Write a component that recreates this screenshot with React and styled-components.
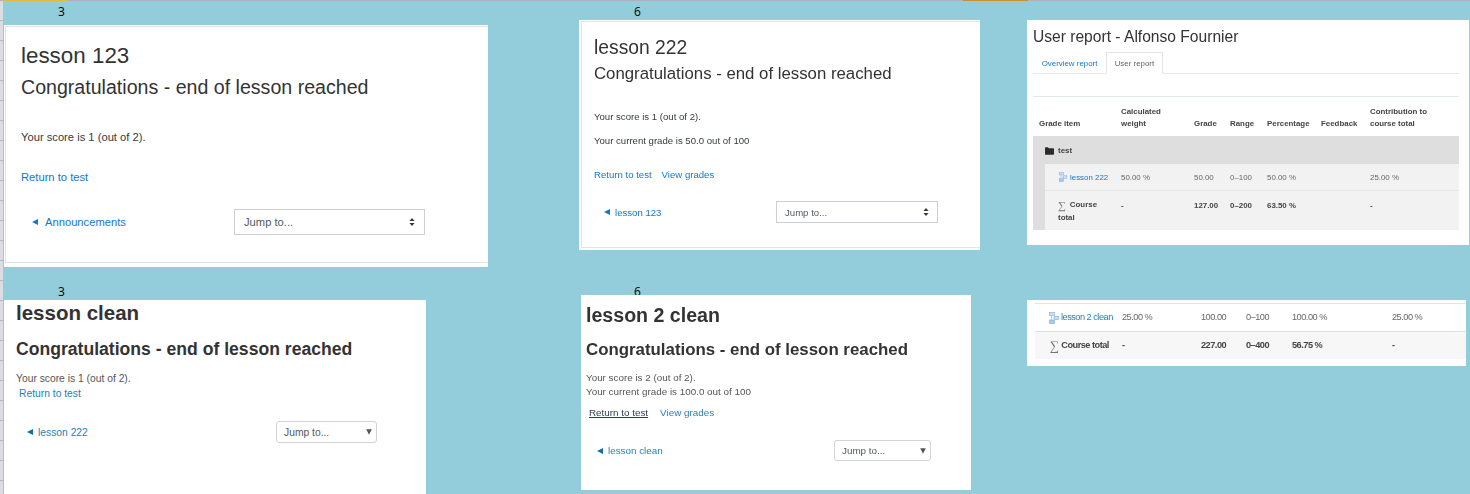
import React from "react";
import styled, { createGlobalStyle } from "styled-components";

const GlobalStyle = createGlobalStyle`
  html, body {
    margin: 0;
    padding: 0;
    background: #93ccdb;
  }
  body {
    font-family: "Liberation Sans", Arial, sans-serif;
    color: #373a3c;
    overflow: hidden;
  }
`;

const LessonIcon = ({ h = 10 }) => (
  <svg width="10" height={h} viewBox="0 0 10 12" aria-hidden="true">
    <rect x="0.5" y="0.5" width="5" height="3" fill="#cfe0f4" stroke="#8db4e2" strokeWidth="0.7" />
    <rect x="0.5" y="8" width="5" height="3.5" fill="#a9c8ee" stroke="#8db4e2" strokeWidth="0.7" />
    <rect x="5.5" y="4.5" width="4" height="3" fill="#cfe0f4" stroke="#8db4e2" strokeWidth="0.7" />
    <path d="M2.5 3.5V8M4 6h1.5" stroke="#8db4e2" strokeWidth="0.7" fill="none" />
  </svg>
);

const FolderIcon = () => (
  <svg width="9" height="8" viewBox="0 0 9 8" aria-hidden="true">
    <path d="M0 1.2C0 .6.4.2 1 .2h2l.8 1H8c.6 0 1 .4 1 1v4.6c0 .6-.4 1-1 1H1c-.6 0-1-.4-1-1z" fill="#2b2b2b" />
  </svg>
);

const UpDownCaret = () => (
  <svg width="6" height="8" viewBox="0 0 6 8" aria-hidden="true">
    <path d="M3 0l2.6 3H.4zM3 8L.4 5h5.2z" fill="#373a3c" />
  </svg>
);

const DownCaret = () => (
  <svg width="6" height="6" viewBox="0 0 6 6" aria-hidden="true">
    <path d="M.2 .3h5.6L3 5.8z" fill="#555" />
  </svg>
);

const Sheet = styled.div`
  position: relative;
  width: 1470px;
  height: 494px;
  overflow: hidden;
  background: #93ccdb;
`;

const TopEdge = styled.div`
  display: flex;
  height: 1px;
  background: #a9b4c0;
`;

const EdgeMark = styled.i`
  display: block;
  margin-left: ${(p) => p.$gap}px;
  width: ${(p) => p.$w}px;
  background: ${(p) => p.$color};
`;

const Gutter = styled.div`
  width: 3px;
  height: 493px;
  border-right: 1px solid #b9bcc2;
  background: repeating-linear-gradient(#dcdde2 0 19px, #b4b6bc 19px 20px);
`;

const CellNumber = styled.span`
  position: absolute;
  left: ${(p) => p.$x}px;
  top: ${(p) => p.$y}px;
  font: 12px/16px "Open Sans", sans-serif;
  color: #000;
`;

/* pasted screenshots sit freely on the sheet */
const Shot = styled.section`
  position: absolute;
  left: ${(p) => p.$x}px;
  top: ${(p) => p.$y}px;
  width: ${(p) => p.$w}px;
  height: ${(p) => p.$h}px;
  box-sizing: border-box;
  overflow: hidden;
  background: #fff;
  ${(p) => p.$soft && "filter: blur(0.35px);"}
`;

const Frame = styled.div`
  box-sizing: border-box;
  margin: 1px 0 0 ${(p) => p.$left}px;
  height: ${(p) => p.$h}px;
  padding: ${(p) => p.$top}px 0 0 ${(p) => p.$pad}px;
  border: solid #e3e3e3;
  border-width: ${(p) => (p.$plain ? "0" : "1px 0 1px 1px")};
`;

const Title = styled.h1`
  margin: 0;
  font-size: ${(p) => p.$size}px;
  line-height: ${(p) => p.$line}px;
  font-weight: ${(p) => (p.$bold ? 700 : 400)};
  color: #333;
`;

const Heading = styled.h2`
  margin: ${(p) => p.$top}px 0 0;
  font-size: ${(p) => p.$size}px;
  line-height: ${(p) => p.$line}px;
  font-weight: ${(p) => (p.$bold ? 700 : 400)};
  color: #333;
`;

const Copy = styled.p`
  margin: ${(p) => p.$top}px 0 0;
  font-size: ${(p) => p.$size}px;
  line-height: ${(p) => p.$line}px;
  color: ${(p) => p.$color || "#373a3c"};
`;

const LinkRow = styled.div`
  display: flex;
  gap: ${(p) => p.$gap || 0}px;
  margin: ${(p) => p.$top}px 0 0 ${(p) => p.$indent || 0}px;
  font-size: ${(p) => p.$size}px;
  line-height: ${(p) => p.$line}px;
`;

const TextLink = styled.a`
  color: ${(p) => (p.$dark ? "#2c3e50" : p.$tone || "#1177d1")};
  text-decoration: ${(p) => (p.$dark ? "underline" : "none")};
`;

const NavRow = styled.div`
  display: flex;
  align-items: center;
  justify-content: space-between;
  width: ${(p) => p.$w}px;
  margin: ${(p) => p.$top}px 0 0 ${(p) => p.$indent}px;
  font-size: ${(p) => p.$size}px;
`;

const BackLink = styled.a`
  display: flex;
  align-items: center;
  gap: ${(p) => p.$gap}px;
  color: ${(p) => p.$tone || "#1177d1"};
`;

const BackArrow = styled.i`
  width: 0;
  height: 0;
  border-style: solid;
  border-width: 3px 6px 3px 0;
  border-color: transparent ${(p) => p.$tone || "#1177d1"} transparent transparent;
`;

const Jump = styled.div`
  display: flex;
  align-items: center;
  justify-content: space-between;
  box-sizing: border-box;
  width: ${(p) => p.$w}px;
  height: ${(p) => p.$h}px;
  padding: 0 ${(p) => p.$right}px 0 ${(p) => p.$left}px;
  border: 1px solid ${(p) => (p.$round ? "#d3d3d3" : "#ccd0d6")};
  border-radius: ${(p) => (p.$round ? 3 : 0)}px;
  background: #fff;
  color: #55595c;
`;

const ReportTitle = styled.h1`
  margin: 0;
  padding: 6px 0 0 6px;
  font-size: 15.6px;
  line-height: 21px;
  font-weight: 400;
  color: #333;
`;

const Tabs = styled.div`
  display: flex;
  box-sizing: border-box;
  width: 426px;
  height: 22px;
  margin: 5px 0 0 6px;
  border-bottom: 1px solid #e8e8e8;
  font-size: 7.9px;
`;

const Tab = styled.div`
  display: flex;
  align-items: center;
  box-sizing: border-box;
  height: 22px;
  padding: 0 ${(p) => (p.$active ? 7.6 : 8.7)}px;
  ${(p) =>
    p.$active
      ? "background: #fff; border: 1px solid #e4e4e4; border-bottom-color: #fff; color: #666;"
      : "color: #1177d1;"}
`;

const Table = styled.table`
  table-layout: fixed;
  width: ${(p) => p.$w}px;
  margin: ${(p) => p.$top}px 0 0 ${(p) => p.$left}px;
  border-collapse: collapse;
  font-size: ${(p) => p.$size}px;
  letter-spacing: ${(p) => p.$track || 0}px;
  line-height: ${(p) => p.$line || 12.5}px;
  color: #555;
`;

const HeadCell = styled.th`
  padding: 0 0 5px 6px;
  height: 39px;
  box-sizing: border-box;
  vertical-align: bottom;
  text-align: left;
  font-weight: 700;
  color: #444;
  border-top: 1px solid #e3e8ec;
`;

const Cell = styled.td`
  box-sizing: border-box;
  height: ${(p) => p.$h}px;
  padding: ${(p) => p.$nudge || 0}px 0 0 ${(p) => p.$pad ?? 6}px;
  vertical-align: ${(p) => (p.$topAlign ? "top" : "middle")};
  background: ${(p) => p.$bg || "transparent"};
  border-bottom: ${(p) => (p.$line ? `1px solid ${p.$line}` : "0")};
  border-top: ${(p) => (p.$lineTop ? `1px solid ${p.$lineTop}` : "0")};
  font-weight: ${(p) => (p.$bold ? 700 : 400)};
  color: ${(p) => (p.$bold ? "#444" : "#666")};
`;

const ItemIcon = styled.span`
  display: inline-block;
  width: ${(p) => p.$w}px;
  vertical-align: middle;
  line-height: 0;
`;

const Sigma = styled.span`
  display: inline-block;
  margin-right: ${(p) => p.$gap}px;
  font: italic 400 ${(p) => p.$size}px/12px "Liberation Serif", serif;
  letter-spacing: 0;
  color: #777;
  vertical-align: middle;
`;

const grades = [82, 73, 36, 37, 54, 49, 95];
const clean = [87, 79, 45, 46, 100, 74];

const App = () => (
  <Sheet>
    <GlobalStyle />
    <TopEdge>
      <EdgeMark $gap={3} $w={65} $color="#e6b93d" />
      <EdgeMark $gap={895} $w={65} $color="#c8922f" />
    </TopEdge>
    <Gutter />

    <CellNumber $x={58} $y={4}>3</CellNumber>
    <CellNumber $x={634} $y={4}>6</CellNumber>
    <CellNumber $x={58} $y={284}>3</CellNumber>
    <CellNumber $x={634} $y={284}>6</CellNumber>

    <Shot $x={4} $y={25} $w={484} $h={242}>
      <Frame $left={1} $h={237} $top={14} $pad={15}>
        <Title $size={22.4} $line={30}>lesson 123</Title>
        <Heading $top={3} $size={19.6} $line={26}>Congratulations - end of lesson reached</Heading>
        <Copy $top={28} $size={11.2} $line={18}>Your score is 1 (out of 2).</Copy>
        <LinkRow $top={22} $size={11.2} $line={18}>
          <TextLink>Return to test</TextLink>
        </LinkRow>
        <NavRow $top={23} $indent={11} $w={393} $size={11.2}>
          <BackLink $gap={7}><BackArrow />Announcements</BackLink>
          <Jump $w={191} $h={26} $left={9} $right={9}>Jump to...<UpDownCaret /></Jump>
        </NavRow>
      </Frame>
    </Shot>

    <Shot $x={579} $y={20} $w={401} $h={230} $soft>
      <Frame $left={2} $h={227} $top={13} $pad={12}>
        <Title $size={19.3} $line={26}>lesson 222</Title>
        <Heading $top={2} $size={16.8} $line={22}>Congratulations - end of lesson reached</Heading>
        <Copy $top={24} $size={9.6} $line={16}>Your score is 1 (out of 2).</Copy>
        <Copy $top={8} $size={9.6} $line={16}>Your current grade is 50.0 out of 100</Copy>
        <LinkRow $top={18} $size={9.6} $line={16} $gap={10}>
          <TextLink>Return to test</TextLink>
          <TextLink>View grades</TextLink>
        </LinkRow>
        <NavRow $top={18} $indent={10} $w={334} $size={9.6}>
          <BackLink $gap={5}><BackArrow />lesson 123</BackLink>
          <Jump $w={162} $h={22} $left={8} $right={8}>Jump to...<UpDownCaret /></Jump>
        </NavRow>
      </Frame>
    </Shot>

    <Shot $x={1027} $y={20} $w={442} $h={225} $soft>
      <ReportTitle>User report - Alfonso Fournier</ReportTitle>
      <Tabs>
        <Tab>Overview report</Tab>
        <Tab $active>User report</Tab>
      </Tabs>
      <Table $w={426} $top={22} $left={6} $size={7.9}>
        <colgroup>
          <col width={12} />
          <col width={70} />
          {grades.slice(1).map((w, i) => <col key={i} width={w} />)}
        </colgroup>
        <thead>
          <tr>
            <HeadCell colSpan={2}>Grade item</HeadCell>
            <HeadCell>Calculated<br />weight</HeadCell>
            <HeadCell>Grade</HeadCell>
            <HeadCell>Range</HeadCell>
            <HeadCell>Percentage</HeadCell>
            <HeadCell>Feedback</HeadCell>
            <HeadCell>Contribution to<br />course total</HeadCell>
          </tr>
        </thead>
        <tbody>
          <tr>
            <Cell colSpan={8} $h={28} $bg="#dedede" $pad={12} $nudge={3} $bold>
              <ItemIcon $w={13}><FolderIcon /></ItemIcon>test
            </Cell>
          </tr>
          <tr>
            <Cell $h={27} $bg="#dedede" $pad={0} />
            <Cell $h={27} $bg="#f2f2f2" $pad={13} $nudge={2} $line="#e6e6e6">
              <ItemIcon $w={12}><LessonIcon h={10} /></ItemIcon><TextLink>lesson&nbsp;222</TextLink>
            </Cell>
            {["50.00 %", "50.00", "0–100", "50.00 %", "", "25.00 %"].map((v, i) => (
              <Cell key={i} $h={27} $bg="#f2f2f2" $nudge={2} $line="#e6e6e6">{v}</Cell>
            ))}
          </tr>
          <tr>
            <Cell $h={39} $bg="#dedede" $pad={0} />
            <Cell $h={39} $bg="#f2f2f2" $pad={13} $nudge={8} $topAlign $bold>
              <Sigma $gap={4} $size={11}>∑</Sigma>Course<br />total
            </Cell>
            {["-", "127.00", "0–200", "63.50 %", "", "-"].map((v, i) => (
              <Cell key={i} $h={39} $bg="#f2f2f2" $nudge={9} $topAlign $bold>{v}</Cell>
            ))}
          </tr>
        </tbody>
      </Table>
    </Shot>

    <Shot $x={4} $y={300} $w={422} $h={194}>
      <Frame $plain $left={0} $h={193} $top={0} $pad={12}>
        <Title $size={20.5} $line={24} $bold>lesson clean</Title>
        <Heading $top={13} $size={17.6} $line={22} $bold>Congratulations - end of lesson reached</Heading>
        <Copy $top={11} $size={10.3} $line={15} $color="#555">Your score is 1 (out of 2).</Copy>
        <LinkRow $top={0} $indent={3} $size={10.3} $line={15}>
          <TextLink $tone="#2283b8">Return to test</TextLink>
        </LinkRow>
        <NavRow $top={20} $indent={11} $w={350} $size={10.3}>
          <BackLink $gap={5} $tone="#2283b8"><BackArrow $tone="#0f70a8" />lesson 222</BackLink>
          <Jump $round $w={101} $h={22} $left={7} $right={4}>Jump to...<DownCaret /></Jump>
        </NavRow>
      </Frame>
    </Shot>

    <Shot $x={581} $y={295} $w={390} $h={195} $soft>
      <Frame $plain $left={0} $h={194} $top={6} $pad={5}>
        <Title $size={19.6} $line={26} $bold>lesson 2 clean</Title>
        <Heading $top={11} $size={16.85} $line={22} $bold>Congratulations - end of lesson reached</Heading>
        <Copy $top={10} $size={9.85} $line={14} $color="#555">Your score is 2 (out of 2).</Copy>
        <Copy $top={0} $size={9.85} $line={14} $color="#555">Your current grade is 100.0 out of 100</Copy>
        <LinkRow $top={7} $indent={3} $gap={12} $size={9.85} $line={14}>
          <TextLink $dark>Return to test</TextLink>
          <TextLink $tone="#2283b8">View grades</TextLink>
        </LinkRow>
        <NavRow $top={20} $indent={11} $w={334} $size={9.85}>
          <BackLink $gap={5} $tone="#2283b8"><BackArrow $tone="#0f70a8" />lesson clean</BackLink>
          <Jump $round $w={97} $h={21} $left={7} $right={4}>Jump to...<DownCaret /></Jump>
        </NavRow>
      </Frame>
    </Shot>

    <Shot $x={1027} $y={300} $w={439} $h={66} $soft>
      <Table $w={431} $top={3} $left={8} $size={9.2} $track={-0.5}>
        <colgroup>
          {clean.map((w, i) => <col key={i} width={w} />)}
        </colgroup>
        <tbody>
          <tr>
            <Cell $h={28} $pad={14} $lineTop="#e3e3e3" $line="#e0e0e0">
              <ItemIcon $w={12}><LessonIcon h={12} /></ItemIcon><TextLink $tone="#2283b8">lesson&nbsp;2&nbsp;clean</TextLink>
            </Cell>
            {["25.00 %", "100.00", "0–100", "100.00 %", "25.00 %"].map((v, i) => (
              <Cell key={i} $h={28} $pad={0} $lineTop="#e3e3e3" $line="#e0e0e0">{v}</Cell>
            ))}
          </tr>
          <tr>
            <Cell $h={27} $pad={15} $bg="#f7f7f7" $bold>
              <Sigma $gap={2} $size={13}>∑</Sigma>Course&nbsp;total
            </Cell>
            {["-", "227.00", "0–400", "56.75 %", "-"].map((v, i) => (
              <Cell key={i} $h={27} $pad={0} $bg="#f7f7f7" $bold>{v}</Cell>
            ))}
          </tr>
        </tbody>
      </Table>
    </Shot>
  </Sheet>
);

export default App;
